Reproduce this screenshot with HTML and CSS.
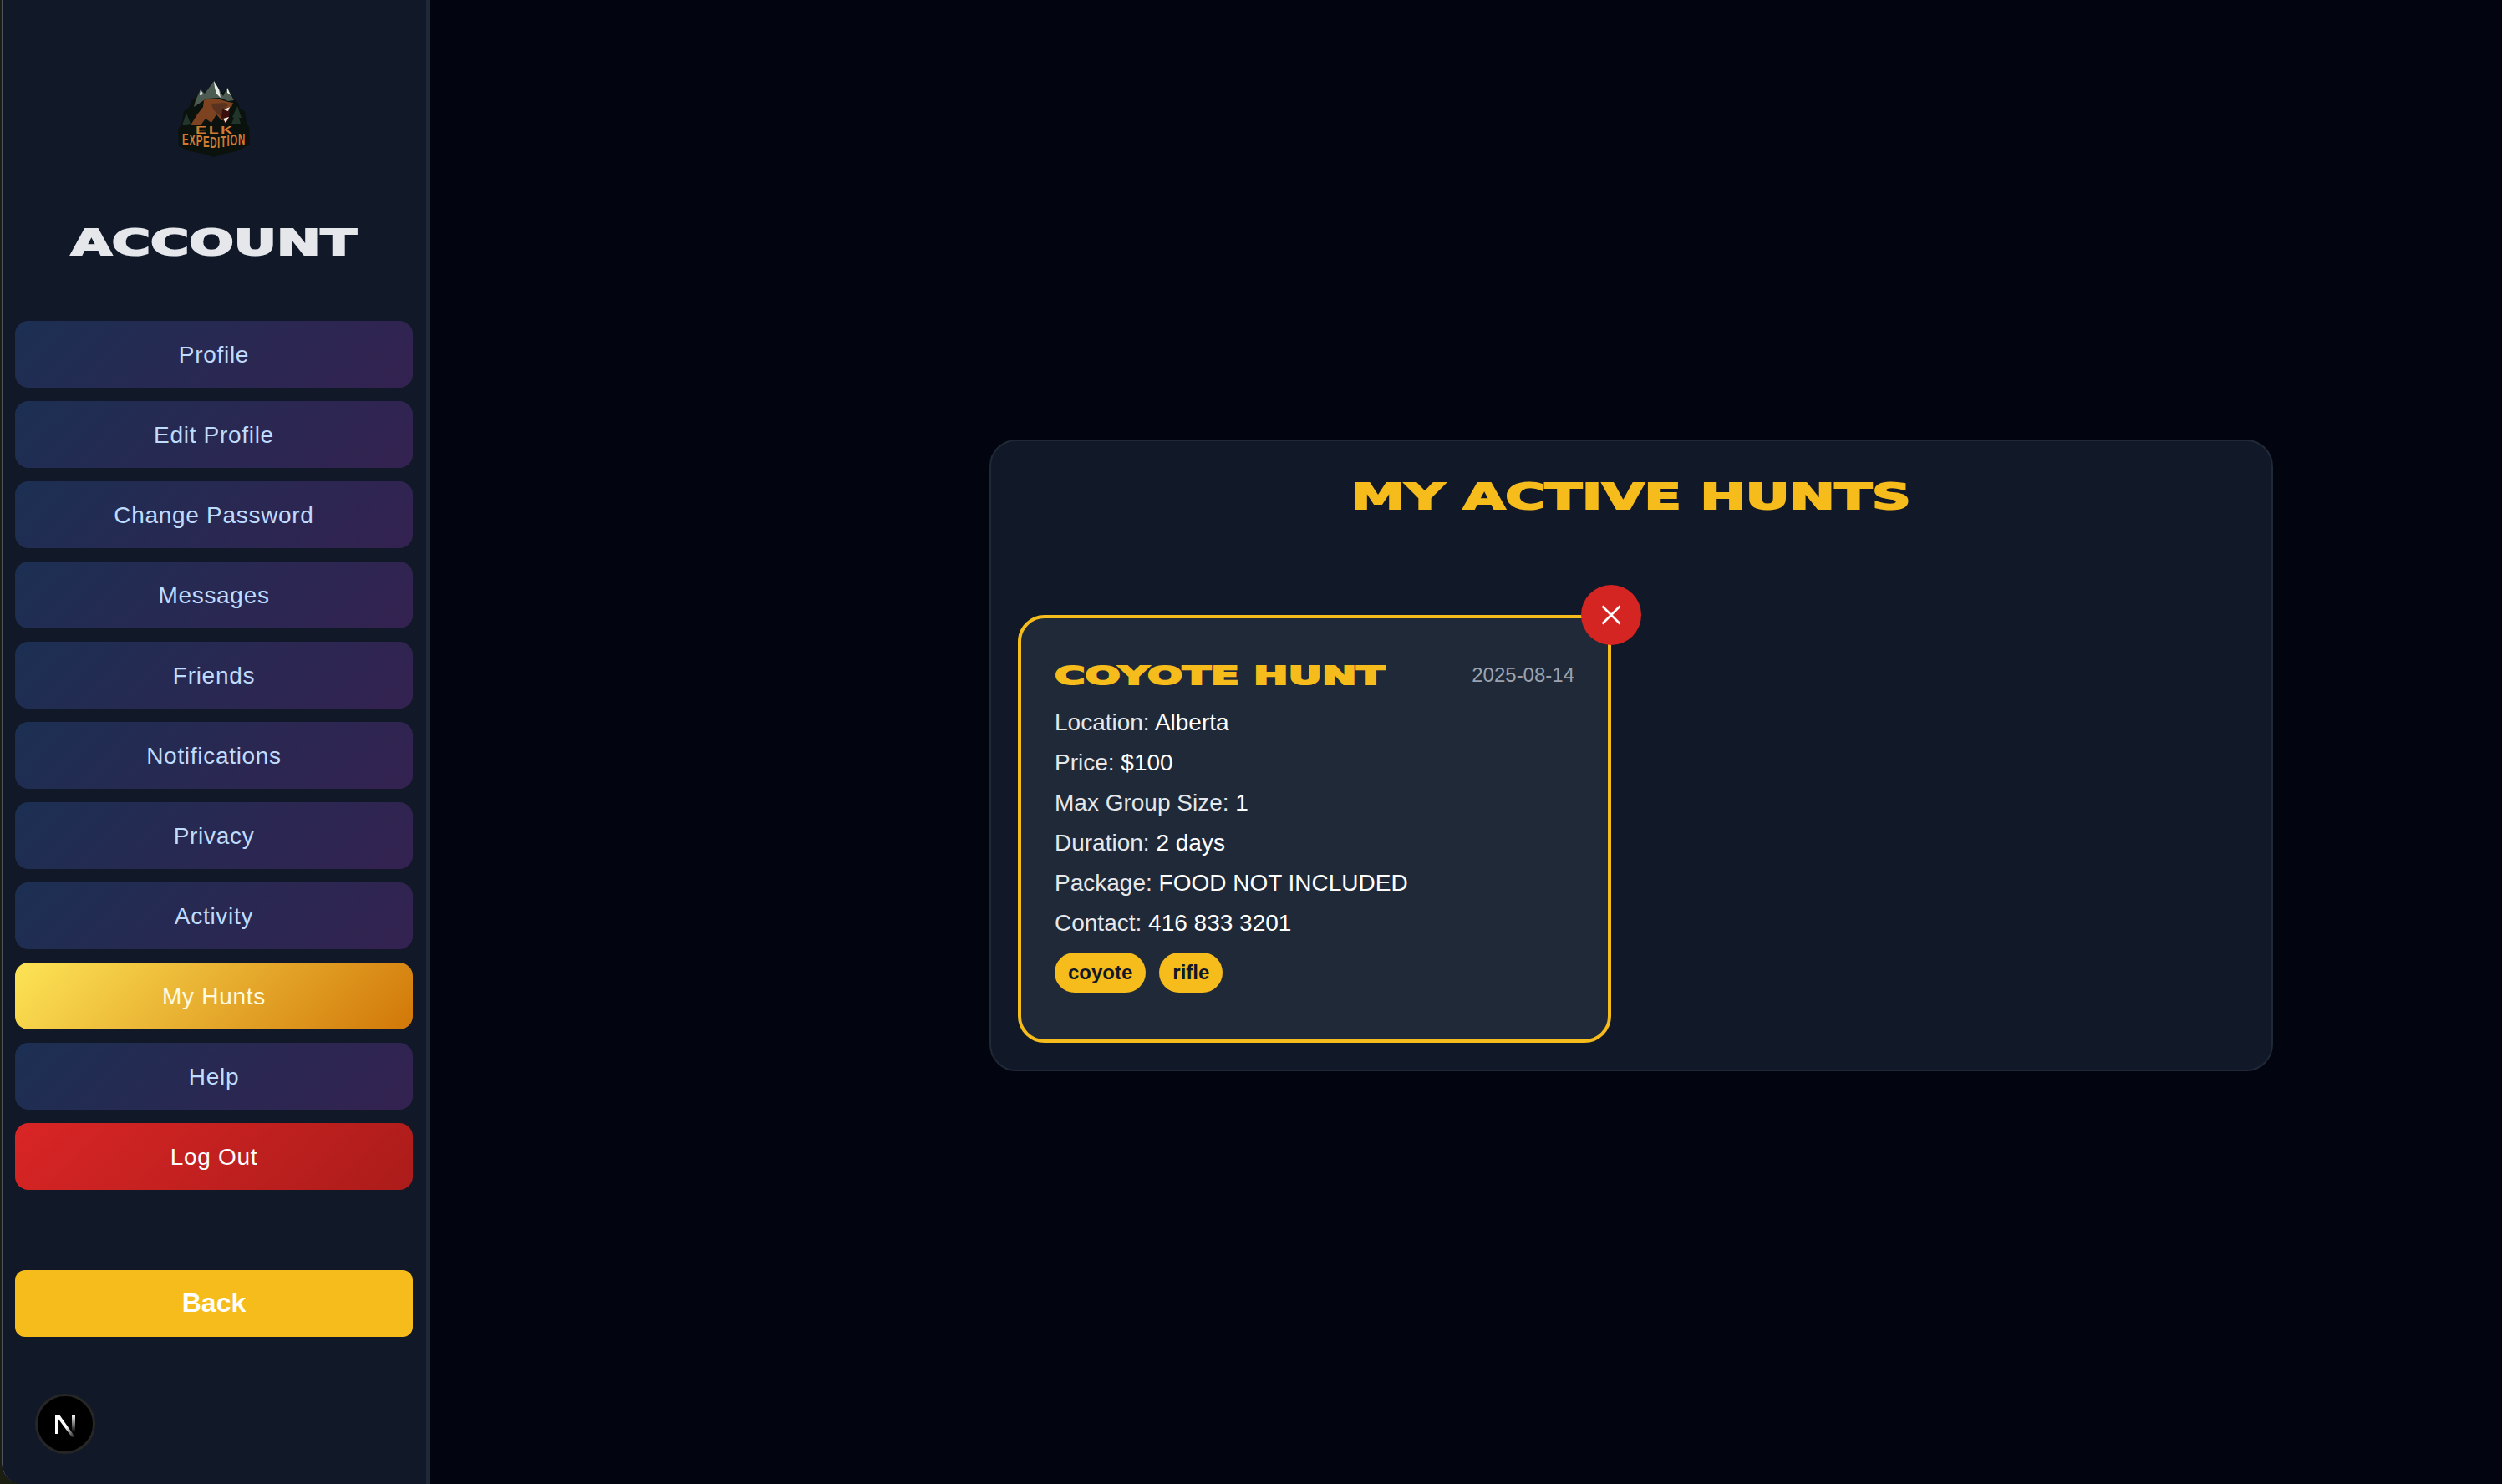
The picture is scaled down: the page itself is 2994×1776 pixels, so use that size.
FILE: index.html
```html
<!DOCTYPE html>
<html>
<head>
    <title>My Hunts</title>
    <link rel="stylesheet" href="styles.css">
</head>
<body>
    <div class="app">
        <aside class="sidebar">
            <svg class="logo" viewBox="0 0 86 91" width="86" height="91">
                <path class="logo-dark" d="M43 0 L50 11 L54 14 L59 8 L66 20 L72 26 L74 33 L80 36 L82 50 L85 55 L86 76 L70 84 L56 87 L43 91 L30 87 L14 84 L1 78 L0 58 L5 50 L7 36 L13 32 L16 24 L24 16 L27 10 L32 15 Z"/>
                <path class="logo-mount" d="M43 0 L54 18 L59 8 L67 23 L60 24 L50 20 L34 21 L19 31 L21 23 L27 10 L32 15 Z"/>
                <path class="logo-snow" d="M43 0 L49 10 L51 20 L46 15 L44 8 Z M27 10 L30 16 L26 17 Z M59 8 L63 17 L59 14 Z"/>
                <path class="logo-tree" d="M71 30 L76 44 L73 44 L75 51 L64 51 L67 44 L65 43 Z M10 38 L15 51 L5 53 Z"/>
                <path class="logo-bear" d="M31 23 L36 21 L50 22 L60 25 L66 26 L64 31 L57 33 L57 47 L52 47 L46 40 L40 50 L33 45 L27 53 L15 53 L23 40 L30 31 Z"/>
                <path class="logo-shade" d="M40 27 L56 26 L60 29 L55 33 L53 44 L46 38 L42 34 Z"/>
                <path class="logo-mouth" d="M53 34 L62 31 L61 46 L56 51 L52 44 Z"/>
                <path class="logo-teeth" d="M55 34 L62 31 L60 36 L57 35 Z M54 45 L61 43 L57 50 Z"/>
                <g transform="scale(1.5 1)">
                    <text class="logo-elk" x="14 24.5 34" y="63 63 63">ELK</text>
                </g>
                <g transform="scale(0.64 1)">
                    <text class="logo-exp" x="8 20.9 33.8 46.7 59.6 73.5 79.5 91.4 97.4 112.4" y="76 77 78 79 80 80 79 78 77 76">EXPEDITION</text>
                </g>
            </svg>
            <h2 class="sidebar-title"><span>ACCOUNT</span></h2>
            <nav class="nav">
                <a class="nav-btn">Profile</a>
                <a class="nav-btn">Edit Profile</a>
                <a class="nav-btn">Change Password</a>
                <a class="nav-btn">Messages</a>
                <a class="nav-btn">Friends</a>
                <a class="nav-btn">Notifications</a>
                <a class="nav-btn">Privacy</a>
                <a class="nav-btn">Activity</a>
                <a class="nav-btn active">My Hunts</a>
                <a class="nav-btn">Help</a>
                <a class="nav-btn logout">Log Out</a>
            </nav>
            <button class="back-btn">Back</button>
        </aside>

        <main class="main">
            <section class="panel">
                <h1 class="panel-title"><span>MY ACTIVE HUNTS</span></h1>
                <div class="hunt-grid">
                    <article class="hunt-card">
                        <button class="remove-btn" aria-label="Remove">
                            <svg viewBox="0 0 24 24" width="24" height="24">
                                <path d="M1.5 1.5 L22.5 22.5 M22.5 1.5 L1.5 22.5"/>
                            </svg>
                        </button>
                        <div class="hunt-head">
                            <h3 class="hunt-title"><span>COYOTE HUNT</span></h3>
                            <span class="hunt-date">2025-08-14</span>
                        </div>
                        <p class="hunt-line">Location: <span class="value">Alberta</span></p>
                        <p class="hunt-line">Price: <span class="value">$100</span></p>
                        <p class="hunt-line">Max Group Size: <span class="value">1</span></p>
                        <p class="hunt-line">Duration: <span class="value">2 days</span></p>
                        <p class="hunt-line">Package: <span class="value">FOOD NOT INCLUDED</span></p>
                        <p class="hunt-line">Contact: <span class="value">416 833 3201</span></p>
                        <div class="tags">
                            <span class="tag">coyote</span>
                            <span class="tag">rifle</span>
                        </div>
                    </article>
                </div>
            </section>
        </main>
    </div>

    <div class="dev-badge">
        <svg viewBox="0 0 66 66" width="66" height="66">
            <defs>
                <linearGradient id="fadeDiag" x1="0" y1="0" x2="1" y2="1">
                    <stop offset="0.55" stop-color="#fff"/>
                    <stop offset="1" stop-color="#fff" stop-opacity="0"/>
                </linearGradient>
                <linearGradient id="fadeBar" x1="0" y1="0" x2="0" y2="1">
                    <stop offset="0" stop-color="#fff"/>
                    <stop offset="1" stop-color="#fff" stop-opacity="0"/>
                </linearGradient>
            </defs>
            <rect x="21" y="22" width="4" height="23" fill="#fff"/>
            <path d="M21 22 H26 L45 49 H41 Z" fill="url(#fadeDiag)"/>
            <rect x="41" y="22" width="4" height="21" fill="url(#fadeBar)"/>
        </svg>
    </div>
</body>
</html>
```

FILE: styles.css
```css
* {
    box-sizing: border-box;
}

html, body {
    margin: 0;
    height: 100%;
}

body {
    font-family: "Liberation Sans", Arial, sans-serif;
    background-color: #1a1f12;
    overflow: hidden;
}

.app {
    display: flex;
    height: 1776px;
    margin-left: 2px;
    border-bottom-left-radius: 24px;
    overflow: hidden;
    background-color: #02040f;
}

.sidebar {
    width: 512px;
    flex-shrink: 0;
    display: flex;
    flex-direction: column;
    align-items: center;
    padding: 97px 16px 0 15px;
    background-color: #111827;
    border-left: 1px solid #4b5563;
    border-right: 4px solid #1f2937;
    border-bottom-left-radius: 24px;
}

.logo {
    display: block;
}

.logo-dark { fill: #0b110d; }
.logo-mount { fill: #4d5c53; }
.logo-snow { fill: #e8ece6; }
.logo-tree { fill: #22352a; }
.logo-bear { fill: #7d421f; }
.logo-shade { fill: #5a3320; }
.logo-mouth { fill: #3a0f0c; }
.logo-teeth { fill: #eeeee2; }

.logo-elk {
    font-family: "Liberation Sans", sans-serif;
    font-weight: bold;
    font-size: 13px;
    fill: #cf7b32;
}

.logo-exp {
    font-family: "Liberation Sans", sans-serif;
    font-weight: bold;
    font-size: 18px;
    fill: #cf7b32;
}

.sidebar-title,
.panel-title,
.hunt-title {
    margin: 0;
    font-family: "DejaVu Sans", sans-serif;
    font-weight: bold;
}

.sidebar-title span,
.panel-title span,
.hunt-title span {
    display: inline-block;
    -webkit-text-stroke: 2px currentColor;
}

.sidebar-title {
    margin: 79px 0 69px;
    font-size: 42px;
    line-height: 48px;
    color: #e5e7eb;
}

.sidebar-title span {
    transform: scaleX(1.5);
}

.nav {
    width: 100%;
    display: flex;
    flex-direction: column;
    gap: 16px;
}

.nav-btn {
    display: flex;
    align-items: center;
    justify-content: center;
    height: 80px;
    padding-top: 1px;
    border-radius: 16px;
    font-size: 28px;
    letter-spacing: 0.7px;
    color: #bfdbfe;
    background: linear-gradient(135deg, #1c2f53, #342251);
}

.nav-btn.active {
    color: #fffbe0;
    background: linear-gradient(135deg, #fde456, #d17708);
}

.nav-btn.logout {
    color: #ffffff;
    background: linear-gradient(135deg, #d92525, #ab1c1a);
}

.back-btn {
    width: 100%;
    height: 80px;
    margin-top: 96px;
    padding: 0 0 2px;
    border: none;
    border-radius: 12px;
    background-color: #f5bc1c;
    color: #ffffff;
    font-family: "Liberation Sans", Arial, sans-serif;
    font-size: 32px;
    font-weight: bold;
}

.main {
    flex: 1;
    padding: 526px 0 0 670px;
}

.panel {
    width: 1536px;
    padding: 32px;
    background-color: #111827;
    border: 2px solid #1f2937;
    border-radius: 32px;
}

.panel-title {
    margin: 0 0 112px;
    padding-top: 3px;
    height: 64px;
    text-align: center;
    font-size: 42px;
    line-height: 64px;
    color: #f5bc1c;
}

.panel-title span {
    transform: scaleX(1.545);
}

.hunt-grid {
    display: grid;
    grid-template-columns: 1fr 1fr;
    gap: 48px;
}

.hunt-card {
    position: relative;
    padding: 40px;
    background-color: #1f2937;
    border: 4px solid #f5bc1c;
    border-radius: 32px;
}

.remove-btn {
    position: absolute;
    top: -40px;
    right: -40px;
    width: 72px;
    height: 72px;
    display: flex;
    align-items: center;
    justify-content: center;
    padding: 0;
    border: none;
    border-radius: 50%;
    background-color: #d52522;
}

.remove-btn path {
    fill: none;
    stroke: #ffffff;
    stroke-width: 2.6;
}

.hunt-head {
    display: flex;
    align-items: center;
    justify-content: space-between;
    height: 56px;
    margin-bottom: 8px;
}

.hunt-title {
    font-size: 31px;
    line-height: 56px;
    color: #f5bc1c;
}

.hunt-title span {
    transform: scaleX(1.6);
    transform-origin: left center;
}

.hunt-date {
    font-size: 24px;
    color: #9ca3af;
}

.hunt-line {
    margin: 0 0 8px;
    font-size: 28px;
    line-height: 41px;
    height: 40px;
    color: #e5e7eb;
}

.value {
    color: #ffffff;
}

.tags {
    display: flex;
    gap: 16px;
    margin: 16px 0;
}

.tag {
    height: 48px;
    padding: 0 16px;
    border-radius: 24px;
    background-color: #f5bc1c;
    color: #111827;
    font-size: 24px;
    font-weight: bold;
    line-height: 47px;
}

.dev-badge {
    position: fixed;
    left: 42px;
    top: 1668px;
    width: 72px;
    height: 72px;
    border-radius: 50%;
    border: 3px solid #262626;
    background-color: #000000;
}

.dev-badge svg {
    display: block;
}
```
